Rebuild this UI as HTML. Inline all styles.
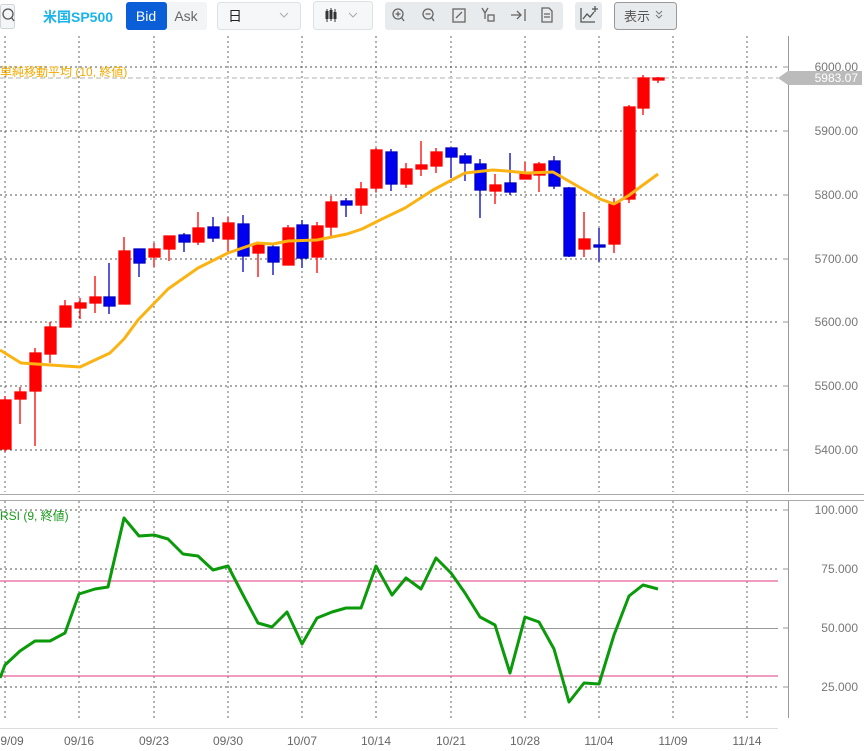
<!DOCTYPE html>
<html><head><meta charset="utf-8"><style>
body{margin:0;width:864px;height:751px;overflow:hidden;background:#fff;font-family:"Liberation Sans","Noto Sans CJK JP",sans-serif;}
svg{position:absolute;left:0;top:0}
</style></head><body>
<svg width="864" height="751" viewBox="0 0 864 751" xmlns="http://www.w3.org/2000/svg" font-family="Liberation Sans, Noto Sans CJK JP, sans-serif">
<!-- toolbar -->
<rect x="0.5" y="4.5" width="14" height="24" rx="2" fill="#f3f5f6" stroke="#cfd6da"/>
<circle cx="8" cy="14" r="5" fill="none" stroke="#555" stroke-width="1.3"/><line x1="11.5" y1="17.5" x2="14" y2="21" stroke="#555" stroke-width="1.3"/>
<text x="43" y="22" font-size="14" font-weight="bold" fill="#1ab4ea">米国SP500</text>
<rect x="166" y="2" width="41" height="28" rx="3" fill="#f3f4f5"/>
<rect x="126" y="2" width="41" height="28" rx="3" fill="#0a5fd8"/>
<text x="146" y="21" font-size="14" fill="#fff" text-anchor="middle">Bid</text>
<text x="186" y="21" font-size="14" fill="#666" text-anchor="middle">Ask</text>
<rect x="217.5" y="2.5" width="83" height="27" rx="3" fill="#f6f7f8" stroke="#dde2e5"/>
<text x="228" y="21" font-size="14" fill="#222">日</text>
<path d="M280 13 l4 4 l4 -4" fill="none" stroke="#aaa"/>
<rect x="313.5" y="1.5" width="59" height="28" rx="3" fill="#f6f7f8" stroke="#dde2e5"/>
<g stroke="#333" stroke-width="1"><line x1="327" y1="9" x2="327" y2="22"/><line x1="331" y1="8" x2="331" y2="21"/><line x1="335" y1="9" x2="335" y2="22"/></g>
<g fill="#333"><rect x="325.5" y="11" width="3" height="8"/><rect x="329.5" y="10" width="3" height="9"/><rect x="333.5" y="12" width="3" height="7"/></g>
<path d="M349 13 l4 4 l4 -4" fill="none" stroke="#aaa"/>
<rect x="385" y="2" width="178" height="28" rx="3" fill="#e8ebed"/>
<g fill="none" stroke="#666" stroke-width="1.3">
<circle cx="398" cy="14" r="5"/><line x1="401.5" y1="17.5" x2="404" y2="21"/><line x1="395.5" y1="14" x2="400.5" y2="14"/><line x1="398" y1="11.5" x2="398" y2="16.5"/>
<circle cx="428" cy="14" r="5"/><line x1="431.5" y1="17.5" x2="434" y2="21"/><line x1="425.5" y1="14" x2="430.5" y2="14"/>
<rect x="453" y="9" width="12" height="13"/><path d="M456 18 l6 -6"/>
<path d="M482 8 l3 5 l3 -5 M485 13 v6"/><rect x="488" y="15" width="6" height="6"/>
<path d="M511 15 h10 M517 11 l4 4 l-4 4 M525 9 v12"/>
<path d="M542 8 h7 l3 3 v11 h-10 z M544 14 h6 M544 17 h6"/>
</g>
<rect x="575" y="2" width="27" height="28" rx="3" fill="#e8ebed"/>
<path d="M581 8 v14 h14 M583 19 l4 -5 l3 3 l4 -5 M592 9 h6 M595 6 v6" fill="none" stroke="#555" stroke-width="1.3"/>
<rect x="614.5" y="2.5" width="62" height="27" rx="3" fill="#e8ebed" stroke="#999"/>
<text x="624" y="21" font-size="13" fill="#555">表示</text>
<path d="M656 11 l3 3 l3 -3 M656 15 l3 3 l3 -3" fill="none" stroke="#777"/>

<!-- grid -->
<g stroke="#555" stroke-width="0.9" stroke-dasharray="2,3">
<line x1="5" y1="36" x2="5" y2="718"/><line x1="79" y1="36" x2="79" y2="718"/><line x1="154" y1="36" x2="154" y2="718"/><line x1="228" y1="36" x2="228" y2="718"/><line x1="302" y1="36" x2="302" y2="718"/><line x1="376" y1="36" x2="376" y2="718"/><line x1="451" y1="36" x2="451" y2="718"/><line x1="525" y1="36" x2="525" y2="718"/><line x1="599" y1="36" x2="599" y2="718"/><line x1="673" y1="36" x2="673" y2="718"/><line x1="747" y1="36" x2="747" y2="718"/>
<line x1="0" y1="67" x2="778" y2="67"/><line x1="0" y1="131" x2="778" y2="131"/><line x1="0" y1="195" x2="778" y2="195"/><line x1="0" y1="259" x2="778" y2="259"/><line x1="0" y1="322" x2="778" y2="322"/><line x1="0" y1="386" x2="778" y2="386"/><line x1="0" y1="450" x2="778" y2="450"/>
<line x1="0" y1="510" x2="778" y2="510"/><line x1="0" y1="569" x2="778" y2="569"/><line x1="0" y1="687" x2="778" y2="687"/>
</g>
<rect x="0" y="492" width="864" height="8" fill="#fff"/>
<line x1="0" y1="494.5" x2="864" y2="494.5" stroke="#aaa"/>
<line x1="0" y1="500.5" x2="864" y2="500.5" stroke="#aaa"/>
<line x1="0" y1="628.5" x2="778" y2="628.5" stroke="#999"/>
<line x1="0" y1="581" x2="778" y2="581" stroke="#e8609a" stroke-width="1.3"/>
<line x1="0" y1="676" x2="778" y2="676" stroke="#e8609a" stroke-width="1.3"/>
<line x1="0" y1="78" x2="778" y2="78" stroke="#ccc" stroke-dasharray="5,3" stroke-width="1.5"/>
<!-- axes -->
<line x1="788.5" y1="36" x2="788.5" y2="492" stroke="#999"/>
<line x1="788.5" y1="501" x2="788.5" y2="718" stroke="#999"/>
<g stroke="#999">
<line x1="783" y1="67" x2="788" y2="67"/><line x1="783" y1="131" x2="788" y2="131"/><line x1="783" y1="195" x2="788" y2="195"/><line x1="783" y1="259" x2="788" y2="259"/><line x1="783" y1="322" x2="788" y2="322"/><line x1="783" y1="386" x2="788" y2="386"/><line x1="783" y1="450" x2="788" y2="450"/>
<line x1="783" y1="510" x2="788" y2="510"/><line x1="783" y1="569" x2="788" y2="569"/><line x1="783" y1="628" x2="788" y2="628"/><line x1="783" y1="687" x2="788" y2="687"/>
<line x1="0" y1="728.5" x2="778" y2="728.5" stroke="#ddd"/>
</g>
<g font-size="12" fill="#777" text-anchor="end">
<text x="858" y="71">6000.00</text><text x="858" y="135">5900.00</text><text x="858" y="199">5800.00</text><text x="858" y="263">5700.00</text><text x="858" y="326">5600.00</text><text x="858" y="390">5500.00</text><text x="858" y="454">5400.00</text>
<text x="858" y="514">100.000</text><text x="858" y="573">75.000</text><text x="858" y="632">50.000</text><text x="858" y="691">25.000</text>
</g>
<path d="M778 78 l10 -7 h74 v14 h-74 z" fill="#bbb"/>
<text x="858" y="82" font-size="12" fill="#fff" text-anchor="end">5983.07</text>
<g font-size="12" fill="#666" text-anchor="middle">
<text x="12" y="745">9/09</text><text x="79" y="745">09/16</text><text x="154" y="745">09/23</text><text x="228" y="745">09/30</text><text x="302" y="745">10/07</text><text x="376" y="745">10/14</text><text x="451" y="745">10/21</text><text x="525" y="745">10/28</text><text x="599" y="745">11/04</text><text x="673" y="745">11/09</text><text x="747" y="745">11/14</text>
</g>
<text x="0" y="76" font-size="12" fill="#f2a900">単純移動平均 (10, 終値)</text>
<text x="0" y="520" font-size="12" fill="#1a9a1a">RSI (9, 終値)</text>

<!-- candles -->
<g stroke-width="1.3">
<g fill="#f00" stroke="#f00">
<line x1="5" y1="396" x2="5" y2="452"/><rect x="0" y="400" width="11" height="49"/>
<line x1="20" y1="387" x2="20" y2="424"/><rect x="15" y="392" width="11" height="7"/>
<line x1="35" y1="348" x2="35" y2="446"/><rect x="30" y="353" width="11" height="38"/>
<line x1="50" y1="322" x2="50" y2="363"/><rect x="45" y="327" width="11" height="27"/>
<line x1="65" y1="300" x2="65" y2="327"/><rect x="60" y="306" width="11" height="21"/>
<line x1="80" y1="298" x2="80" y2="319"/><rect x="75" y="303" width="11" height="5"/>
<line x1="95" y1="276" x2="95" y2="313"/><rect x="90" y="297" width="11" height="6"/>
<line x1="124" y1="237" x2="124" y2="304"/><rect x="119" y="251" width="11" height="53"/>
<line x1="154" y1="243" x2="154" y2="267"/><rect x="149" y="249" width="11" height="8"/>
<line x1="169" y1="236" x2="169" y2="261"/><rect x="164" y="236" width="11" height="13"/>
<line x1="198" y1="212" x2="198" y2="245"/><rect x="193" y="228" width="11" height="14"/>
<line x1="228" y1="217" x2="228" y2="253"/><rect x="223" y="223" width="11" height="16"/>
<line x1="258" y1="245" x2="258" y2="277"/><rect x="253" y="245" width="11" height="8"/>
<line x1="288" y1="225" x2="288" y2="265"/><rect x="283" y="228" width="11" height="37"/>
<line x1="317" y1="222" x2="317" y2="273"/><rect x="312" y="226" width="11" height="31"/>
<line x1="331" y1="196" x2="331" y2="237"/><rect x="326" y="202" width="11" height="25"/>
<line x1="361" y1="182" x2="361" y2="214"/><rect x="356" y="189" width="11" height="16"/>
<line x1="376" y1="148" x2="376" y2="192"/><rect x="371" y="150" width="11" height="38"/>
<line x1="406" y1="163" x2="406" y2="188"/><rect x="401" y="169" width="11" height="15"/>
<line x1="421" y1="141" x2="421" y2="176"/><rect x="416" y="165" width="11" height="4"/>
<line x1="436" y1="148" x2="436" y2="173"/><rect x="431" y="152" width="11" height="14"/>
<line x1="495" y1="174" x2="495" y2="204"/><rect x="490" y="185" width="11" height="6"/>
<line x1="525" y1="162" x2="525" y2="179"/><rect x="520" y="173" width="11" height="6"/>
<line x1="539" y1="162" x2="539" y2="192"/><rect x="534" y="164" width="11" height="11"/>
<line x1="584" y1="212" x2="584" y2="257"/><rect x="579" y="239" width="11" height="10"/>
<line x1="614" y1="198" x2="614" y2="253"/><rect x="609" y="203" width="11" height="41"/>
<line x1="629" y1="105" x2="629" y2="203"/><rect x="624" y="107" width="11" height="92"/>
<line x1="643" y1="75" x2="643" y2="115"/><rect x="638" y="78" width="11" height="30"/>
<line x1="658" y1="77" x2="658" y2="83"/><rect x="653" y="78" width="11" height="2"/>
</g>
<g fill="#0000f0" stroke="#0000c0">
<line x1="109" y1="263" x2="109" y2="314"/><rect x="104" y="297" width="11" height="9"/>
<line x1="139" y1="249" x2="139" y2="277"/><rect x="134" y="249" width="11" height="14"/>
<line x1="184" y1="233" x2="184" y2="252"/><rect x="179" y="235" width="11" height="7"/>
<line x1="213" y1="217" x2="213" y2="242"/><rect x="208" y="227" width="11" height="11"/>
<line x1="243" y1="215" x2="243" y2="272"/><rect x="238" y="224" width="11" height="32"/>
<line x1="273" y1="245" x2="273" y2="275"/><rect x="268" y="247" width="11" height="15"/>
<line x1="302" y1="220" x2="302" y2="268"/><rect x="297" y="225" width="11" height="33"/>
<line x1="346" y1="198" x2="346" y2="217"/><rect x="341" y="201" width="11" height="4"/>
<line x1="391" y1="149" x2="391" y2="191"/><rect x="386" y="152" width="11" height="32"/>
<line x1="451" y1="148" x2="451" y2="178"/><rect x="446" y="148" width="11" height="9"/>
<line x1="465" y1="153" x2="465" y2="181"/><rect x="460" y="156" width="11" height="7"/>
<line x1="480" y1="159" x2="480" y2="218"/><rect x="475" y="164" width="11" height="26"/>
<line x1="510" y1="153" x2="510" y2="195"/><rect x="505" y="183" width="11" height="9"/>
<line x1="554" y1="156" x2="554" y2="189"/><rect x="549" y="161" width="11" height="25"/>
<line x1="569" y1="187" x2="569" y2="257"/><rect x="564" y="188" width="11" height="68"/>
<line x1="599" y1="228" x2="599" y2="262"/><rect x="594" y="245" width="11" height="2"/>
</g>
</g>
<polyline fill="none" stroke="#fbb314" stroke-width="3" stroke-linejoin="round" points="0,350 21,363 80,367 110,353 124,339 138,320 168,289 198,268 228,253 257,243 273,244 288,241 317,240 347,234 362,229 380,220 405,208 433,190 465,173 493,170 507,171 527,173 553,172 600,199 614,204 628,196 658,174"/>
<polyline fill="none" stroke="#0a9a0a" stroke-width="3" stroke-linejoin="round" points="0,678 5,665 20,651 35,641 50,641 65,633 79,594 95,589 108,587 124,518 139,536 154,535 168,539 183,554 198,556 213,570 228,566 242,593 258,623 272,627 287,612 302,644 317,618 332,612 346,608 361,608 376,566 392,595 406,578 421,589 436,558 451,573 465,593 480,617 495,625 510,673 525,617 539,622 554,649 569,702 584,683 599,684 614,635 629,596 643,585 658,589"/>
</svg>
</body></html>
